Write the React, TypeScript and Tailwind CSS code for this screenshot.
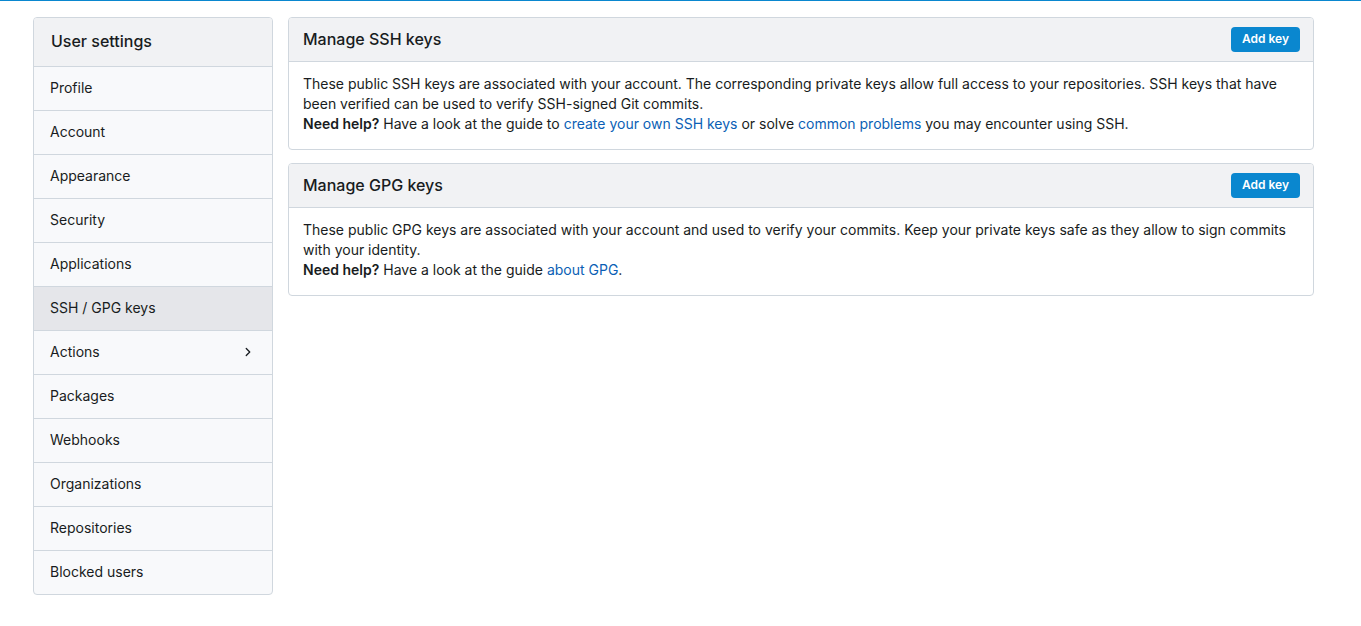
const navItems = [
  "Profile",
  "Account",
  "Appearance",
  "Security",
  "Applications",
  "SSH / GPG keys",
  "Actions",
  "Packages",
  "Webhooks",
  "Organizations",
  "Repositories",
  "Blocked users",
]

function KeyBox({ title, children }: { title: string; children: React.ReactNode }) {
  return (
    <div className="border border-[#d0d7de] rounded-[4px] overflow-hidden">
      <div className="flex items-center justify-between h-[44px] pl-[14px] pr-[13px] pb-[2px] bg-[#f1f2f4] border-b border-[#d0d7de]">
        <h4 className="text-[16px] font-medium text-[#181c21]">{title}</h4>
        <button className="h-[25px] w-[69px] mt-[1px] rounded-[4px] bg-[#0a87cf] text-white text-[12px] font-semibold">
          Add key
        </button>
      </div>
      <div className="px-[14px] pt-[12px] pb-[15px] text-[14px] leading-[20px] text-[#181c21]">{children}</div>
    </div>
  )
}

export default function App() {
  return (
    <div
      className="min-h-screen bg-white border-t border-[#0a87cf]"
      style={{ fontFamily: "Inter, 'Noto Sans', sans-serif" }}
    >
      <div className="ml-[33px] w-[1281px] pt-[16px] flex gap-[15px] items-start">
        <nav className="w-[240px] shrink-0 border border-[#d0d7de] rounded-[4px] overflow-hidden bg-[#f8f9fb]">
          <div className="h-[48px] flex items-center px-[17px] pb-[2px] bg-[#f1f2f4] text-[16px] font-medium text-[#181c21]">
            User settings
          </div>
          {navItems.map((item) => (
            <div
              key={item}
              className={`h-[44px] flex items-center justify-between px-[16px] pb-[2px] border-t border-[#d0d7de] text-[14px] text-[#181c21] ${
                item === "SSH / GPG keys" ? "bg-[#e5e6ea]" : ""
              }`}
            >
              <span>{item}</span>
              {item === "Actions" && (
                <svg width="14" height="14" viewBox="0 0 16 16" className="mr-[1px]">
                  <path d="M6 4l4 4-4 4" fill="none" stroke="#181c21" strokeWidth="1.5" strokeLinecap="round" strokeLinejoin="round" />
                </svg>
              )}
            </div>
          ))}
        </nav>

        <main className="flex-1 flex flex-col gap-[13px]">
          <KeyBox title="Manage SSH keys">
            <p>
              These public SSH keys are associated with your account. The corresponding private keys allow full access
              to your repositories. SSH keys that have been verified can be used to verify SSH-signed Git commits.
            </p>
            <p>
              <strong className="font-semibold">Need help?</strong> Have a look at the guide to{" "}
              <a className="text-[#0b5fb5]">create your own SSH keys</a> or solve{" "}
              <a className="text-[#0b5fb5]">common problems</a> you may encounter using SSH.
            </p>
          </KeyBox>
          <KeyBox title="Manage GPG keys">
            <p>
              These public GPG keys are associated with your account and used to verify your commits. Keep your private
              keys safe as they allow to sign commits with your identity.
            </p>
            <p>
              <strong className="font-semibold">Need help?</strong> Have a look at the guide{" "}
              <a className="text-[#0b5fb5]">about GPG</a>.
            </p>
          </KeyBox>
        </main>
      </div>
    </div>
  )
}
